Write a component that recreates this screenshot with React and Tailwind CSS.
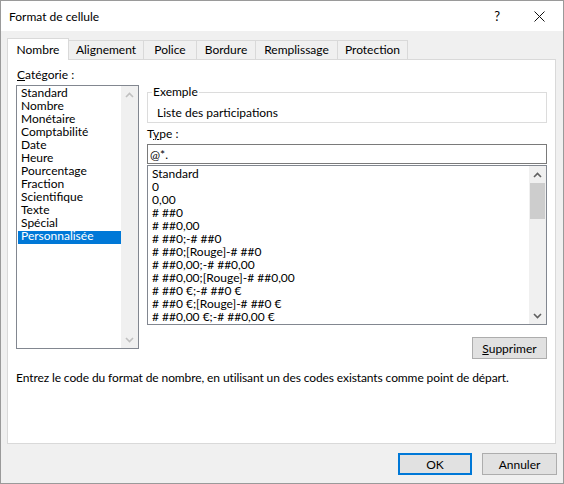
import React from 'react';

const categories = [
  'Standard', 'Nombre', 'Monétaire', 'Comptabilité', 'Date', 'Heure',
  'Pourcentage', 'Fraction', 'Scientifique', 'Texte', 'Spécial', 'Personnalisée',
];

const formats = [
  'Standard', '0', '0,00', '# ##0', '# ##0,00', '# ##0;-# ##0',
  '# ##0;[Rouge]-# ##0', '# ##0,00;-# ##0,00', '# ##0,00;[Rouge]-# ##0,00',
  '# ##0 €;-# ##0 €', '# ##0 €;[Rouge]-# ##0 €', '# ##0,00 €;-# ##0,00 €',
];

const tabs = [
  { label: 'Nombre', w: 'w-[62px]' },
  { label: 'Alignement', w: 'w-[76px]' },
  { label: 'Police', w: 'w-[54px]' },
  { label: 'Bordure', w: 'w-[60px]' },
  { label: 'Remplissage', w: 'w-[83px]' },
  { label: 'Protection', w: 'w-[71px]' },
];

function Chevron({ up, color }) {
  return (
    <svg width="9" height="6" viewBox="0 0 9 6" className="block">
      <path
        d={up ? 'M1 5 L4.5 1.5 L8 5' : 'M1 1 L4.5 4.5 L8 1'}
        fill="none"
        stroke={color}
        strokeWidth="1.6"
      />
    </svg>
  );
}

// Windows 10 style vertical scrollbar
function ScrollBar({ enabled }) {
  const c = enabled ? '#606060' : '#c0c0c0';
  return (
    <div className="w-[17px] h-full bg-[#f0f0f0] flex flex-col shrink-0">
      <div className="h-[17px] flex items-center justify-center">
        <Chevron up color={c} />
      </div>
      {enabled && <div className="h-[36px] mx-[1px] bg-[#cdcdcd]" />}
      <div className="flex-1" />
      <div className="h-[17px] flex items-center justify-center">
        <Chevron color={c} />
      </div>
    </div>
  );
}

function Button({ children, primary, w }) {
  return (
    <button
      className={`${w} h-[22px] bg-[#e1e1e1] flex items-center justify-center leading-[15px] text-black ${
        primary ? 'border-2 border-[#0078d7]' : 'border border-[#adadad]'
      }`}
    >
      {children}
    </button>
  );
}

export default function App() {
  return (
    <div
      className="w-[564px] h-[484px] border border-[#9a9a9a] bg-[#f0f0f0] flex flex-col text-[12px] text-black overflow-hidden"
      style={{ fontFamily: 'Lato, "Noto Sans", sans-serif' }}
    >
      {/* Title bar */}
      <div className="h-[30px] bg-white flex items-center shrink-0">
        <span className="ml-[8px] leading-[15px] mt-[1px]">Format de cellule</span>
        <span className="ml-auto text-[13px] leading-[15px] mr-[34px]">?</span>
        <svg width="11" height="11" viewBox="0 0 11 11" className="mr-[18px]">
          <path d="M0.5 0.5 L10.5 10.5 M10.5 0.5 L0.5 10.5" stroke="#111" strokeWidth="1" />
        </svg>
      </div>

      {/* Tabs */}
      <div className="flex items-start h-[21px] mt-[7px] ml-[6px] relative z-10 shrink-0">
        {tabs.map((t, i) =>
          i === 0 ? (
            <div
              key={t.label}
              className={`${t.w} h-[22px] bg-white border border-b-0 border-[#d9d9d9] flex justify-center pt-[3px] leading-[15px] relative z-10`}
            >
              {t.label}
            </div>
          ) : (
            <div
              key={t.label}
              className={`${t.w} h-[19px] mt-[2px] -ml-px bg-[#f0f0f0] border border-b-0 border-[#d9d9d9] flex justify-center pt-[1px] leading-[15px]`}
            >
              {t.label}
            </div>
          )
        )}
      </div>

      {/* Tab panel */}
      <div className="ml-[6px] w-[549px] h-[385px] bg-white border border-[#d9d9d9] pt-[7px] px-[8px] flex flex-col shrink-0">
        <div className="flex gap-[8px]">
          {/* Category */}
          <div className="w-[123px] flex flex-col">
            <div className="leading-[15px] pl-[1px]">
              <span className="underline">C</span>atégorie :
            </div>
            <div className="mt-[3px] h-[264px] border border-[#828790] flex">
              <div className="flex-1 pt-[2px] pl-[1px]">
                {categories.map((c) => (
                  <div
                    key={c}
                    className={`h-[13px] leading-[9px] pl-[3px] whitespace-nowrap ${
                      c === 'Personnalisée' ? 'bg-[#0078d7] text-white' : ''
                    }`}
                  >
                    {c}
                  </div>
                ))}
              </div>
              <ScrollBar />
            </div>
          </div>

          {/* Right column */}
          <div className="w-[400px] flex flex-col">
            <div className="mt-[25px] h-[31px] border border-[#dcdcdc] px-[4px]">
              <div className="-mt-[9px] w-fit bg-white px-[1px] leading-[15px]">Exemple</div>
              <div className="mt-[6px] pl-[5px] leading-[15px]">Liste des participations</div>
            </div>
            <div className="mt-[3px] leading-[15px]">
              T<span className="underline">y</span>pe :
            </div>
            <div className="mt-[3px] h-[20px] border border-[#7a7a7a] pl-[2px] flex items-center leading-[15px]">
              @*.
            </div>
            <div className="mt-[1px] h-[160px] border border-[#828790] flex">
              <div className="flex-1 pt-[3px] pl-[4px]">
                {formats.map((f) => (
                  <div key={f} className="h-[13px] leading-[9px] whitespace-nowrap">
                    {f}
                  </div>
                ))}
              </div>
              <ScrollBar enabled />
            </div>
            <div className="mt-[12px] flex justify-end">
              <Button w="w-[75px]">
                <span>
                  <span className="underline">S</span>upprimer
                </span>
              </Button>
            </div>
          </div>
        </div>

        <div className="mt-[11px] leading-[15px] whitespace-nowrap tracking-[-0.1px]">
          Entrez le code du format de nombre, en utilisant un des codes existants comme point de départ.
        </div>
      </div>

      {/* Dialog buttons */}
      <div className="flex justify-end gap-[10px] mt-[9px] mr-[6px]">
        <Button primary w="w-[74px]">OK</Button>
        <Button w="w-[75px]">Annuler</Button>
      </div>
    </div>
  );
}
